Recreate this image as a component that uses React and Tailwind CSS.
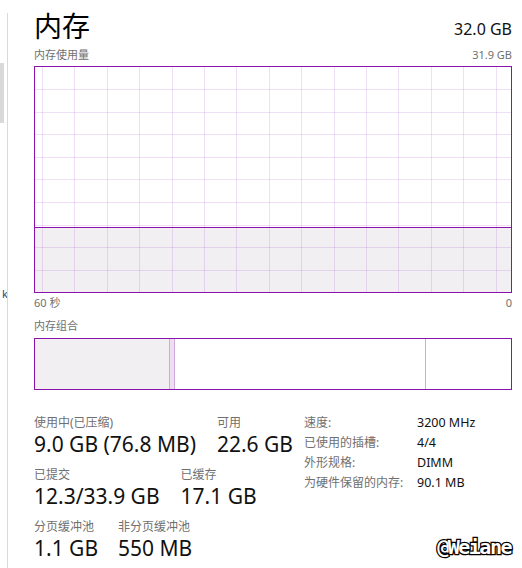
const PURPLE = "#8b12ae";

const MemoryGraph = () => {
  const w = 476;
  const h = 225;
  const cols = Array.from({ length: 15 }, (_, i) => Math.round(7 + 32.4 * i));
  const rows = Array.from({ length: 9 }, (_, i) => Math.ceil(66 + 22.6 * (i + 1)) - 67);

  return (
    <svg width={w} height={h} className="block" shapeRendering="crispEdges">
      <rect x="0" y="161" width={w} height={h - 161} fill="#f1eff2" />
      {cols.map((x) => (
        <line key={"c" + x} x1={x + 0.5} x2={x + 0.5} y1="0" y2={h} stroke={PURPLE} strokeOpacity="0.13" />
      ))}
      {rows.map((y) => (
        <line key={"r" + y} x1="0" x2={w} y1={y + 0.5} y2={y + 0.5} stroke={PURPLE} strokeOpacity="0.13" />
      ))}
      <line x1="0" x2={w} y1="160.5" y2="160.5" stroke={PURPLE} />
    </svg>
  );
};

const Stat = ({ label, value }) => (
  <div>
    <div className="text-[12px] leading-[16px] text-[#707070]">{label}</div>
    <div className="text-[21px] leading-[26px] text-[#111]">{value}</div>
  </div>
);

const details = [
  ["速度:", "3200 MHz"],
  ["已使用的插槽:", "4/4"],
  ["外形规格:", "DIMM"],
  ["为硬件保留的内存:", "90.1 MB"],
];

export default function App() {
  return (
    <div className="relative flex w-[522px] h-[568px] overflow-hidden bg-white font-['Noto_Sans','Noto_Sans_CJK_SC',sans-serif]">
      {/* leftover of the side list */}
      <div className="w-[7px] shrink-0 flex flex-col overflow-hidden">
        <div className="mt-[63px] h-[60px] w-[4px] bg-[#d9d9d9]" />
        <div className="mt-[164px] pl-[2px] text-[11px] leading-[14px] text-[#2b4470]">k</div>
      </div>
      <div className="mt-[13px] w-px shrink-0 bg-[#dadada]" />

      <div className="flex-1 pl-[26px] pr-[10px]">
        <div className="flex justify-between items-start pt-[8px] h-[44px]">
          <h1 className="text-[28px] leading-[36px] text-black">内存</h1>
          <span className="mt-[11px] text-[16px] leading-[20px] text-[#111]">32.0 GB</span>
        </div>

        <div className="mt-[4px] flex justify-between text-[11px] leading-[14px] text-[#707070]">
          <span>内存使用量</span>
          <span>31.9 GB</span>
        </div>

        <div className="mt-[4px] h-[227px] border border-[#8b12ae]">
          <MemoryGraph />
        </div>

        <div className="mt-[3px] flex justify-between text-[11px] leading-[14px] text-[#707070]">
          <span>60 秒</span>
          <span>0</span>
        </div>

        <div className="mt-[9px] text-[11px] leading-[14px] text-[#707070]">内存组合</div>

        <div className="mt-[5px] flex h-[52px] border border-[#8b12ae]">
          <div className="w-[134px] bg-[#f1eff2]" />
          <div className="w-[6px] border-x border-[#cfaada] bg-[#ece0f0]" />
          <div className="w-[251px] border-r border-[#cfaada]" />
          <div className="flex-1" />
        </div>

        <div className="mt-[23px] flex items-start">
          <div className="w-[270px] pt-[2px] flex flex-col gap-[10px]">
            <div className="flex gap-[21px]">
              <Stat label="使用中(已压缩)" value="9.0 GB (76.8 MB)" />
              <Stat label="可用" value="22.6 GB" />
            </div>
            <div className="flex gap-[21px]">
              <Stat label="已提交" value="12.3/33.9 GB" />
              <Stat label="已缓存" value="17.1 GB" />
            </div>
            <div className="flex gap-[20px]">
              <Stat label="分页缓冲池" value="1.1 GB" />
              <Stat label="非分页缓冲池" value="550 MB" />
            </div>
          </div>

          <div className="grid grid-cols-[113px_auto] leading-[20px]">
            {details.map(([k, v]) => (
              <div key={k} className="contents">
                <span className="text-[12px] text-[#707070]">{k}</span>
                <span className="text-[12.5px] text-[#111]">{v}</span>
              </div>
            ))}
          </div>
        </div>
      </div>

      {/* watermark */}
      <div className="absolute right-[11px] bottom-[9px] text-[20px] leading-[24px] font-bold tracking-[-1.5px] text-white [-webkit-text-stroke:2.5px_black] [paint-order:stroke_fill] font-['DejaVu_Sans_Mono',monospace]">
        @Weiane
      </div>
    </div>
  );
}
